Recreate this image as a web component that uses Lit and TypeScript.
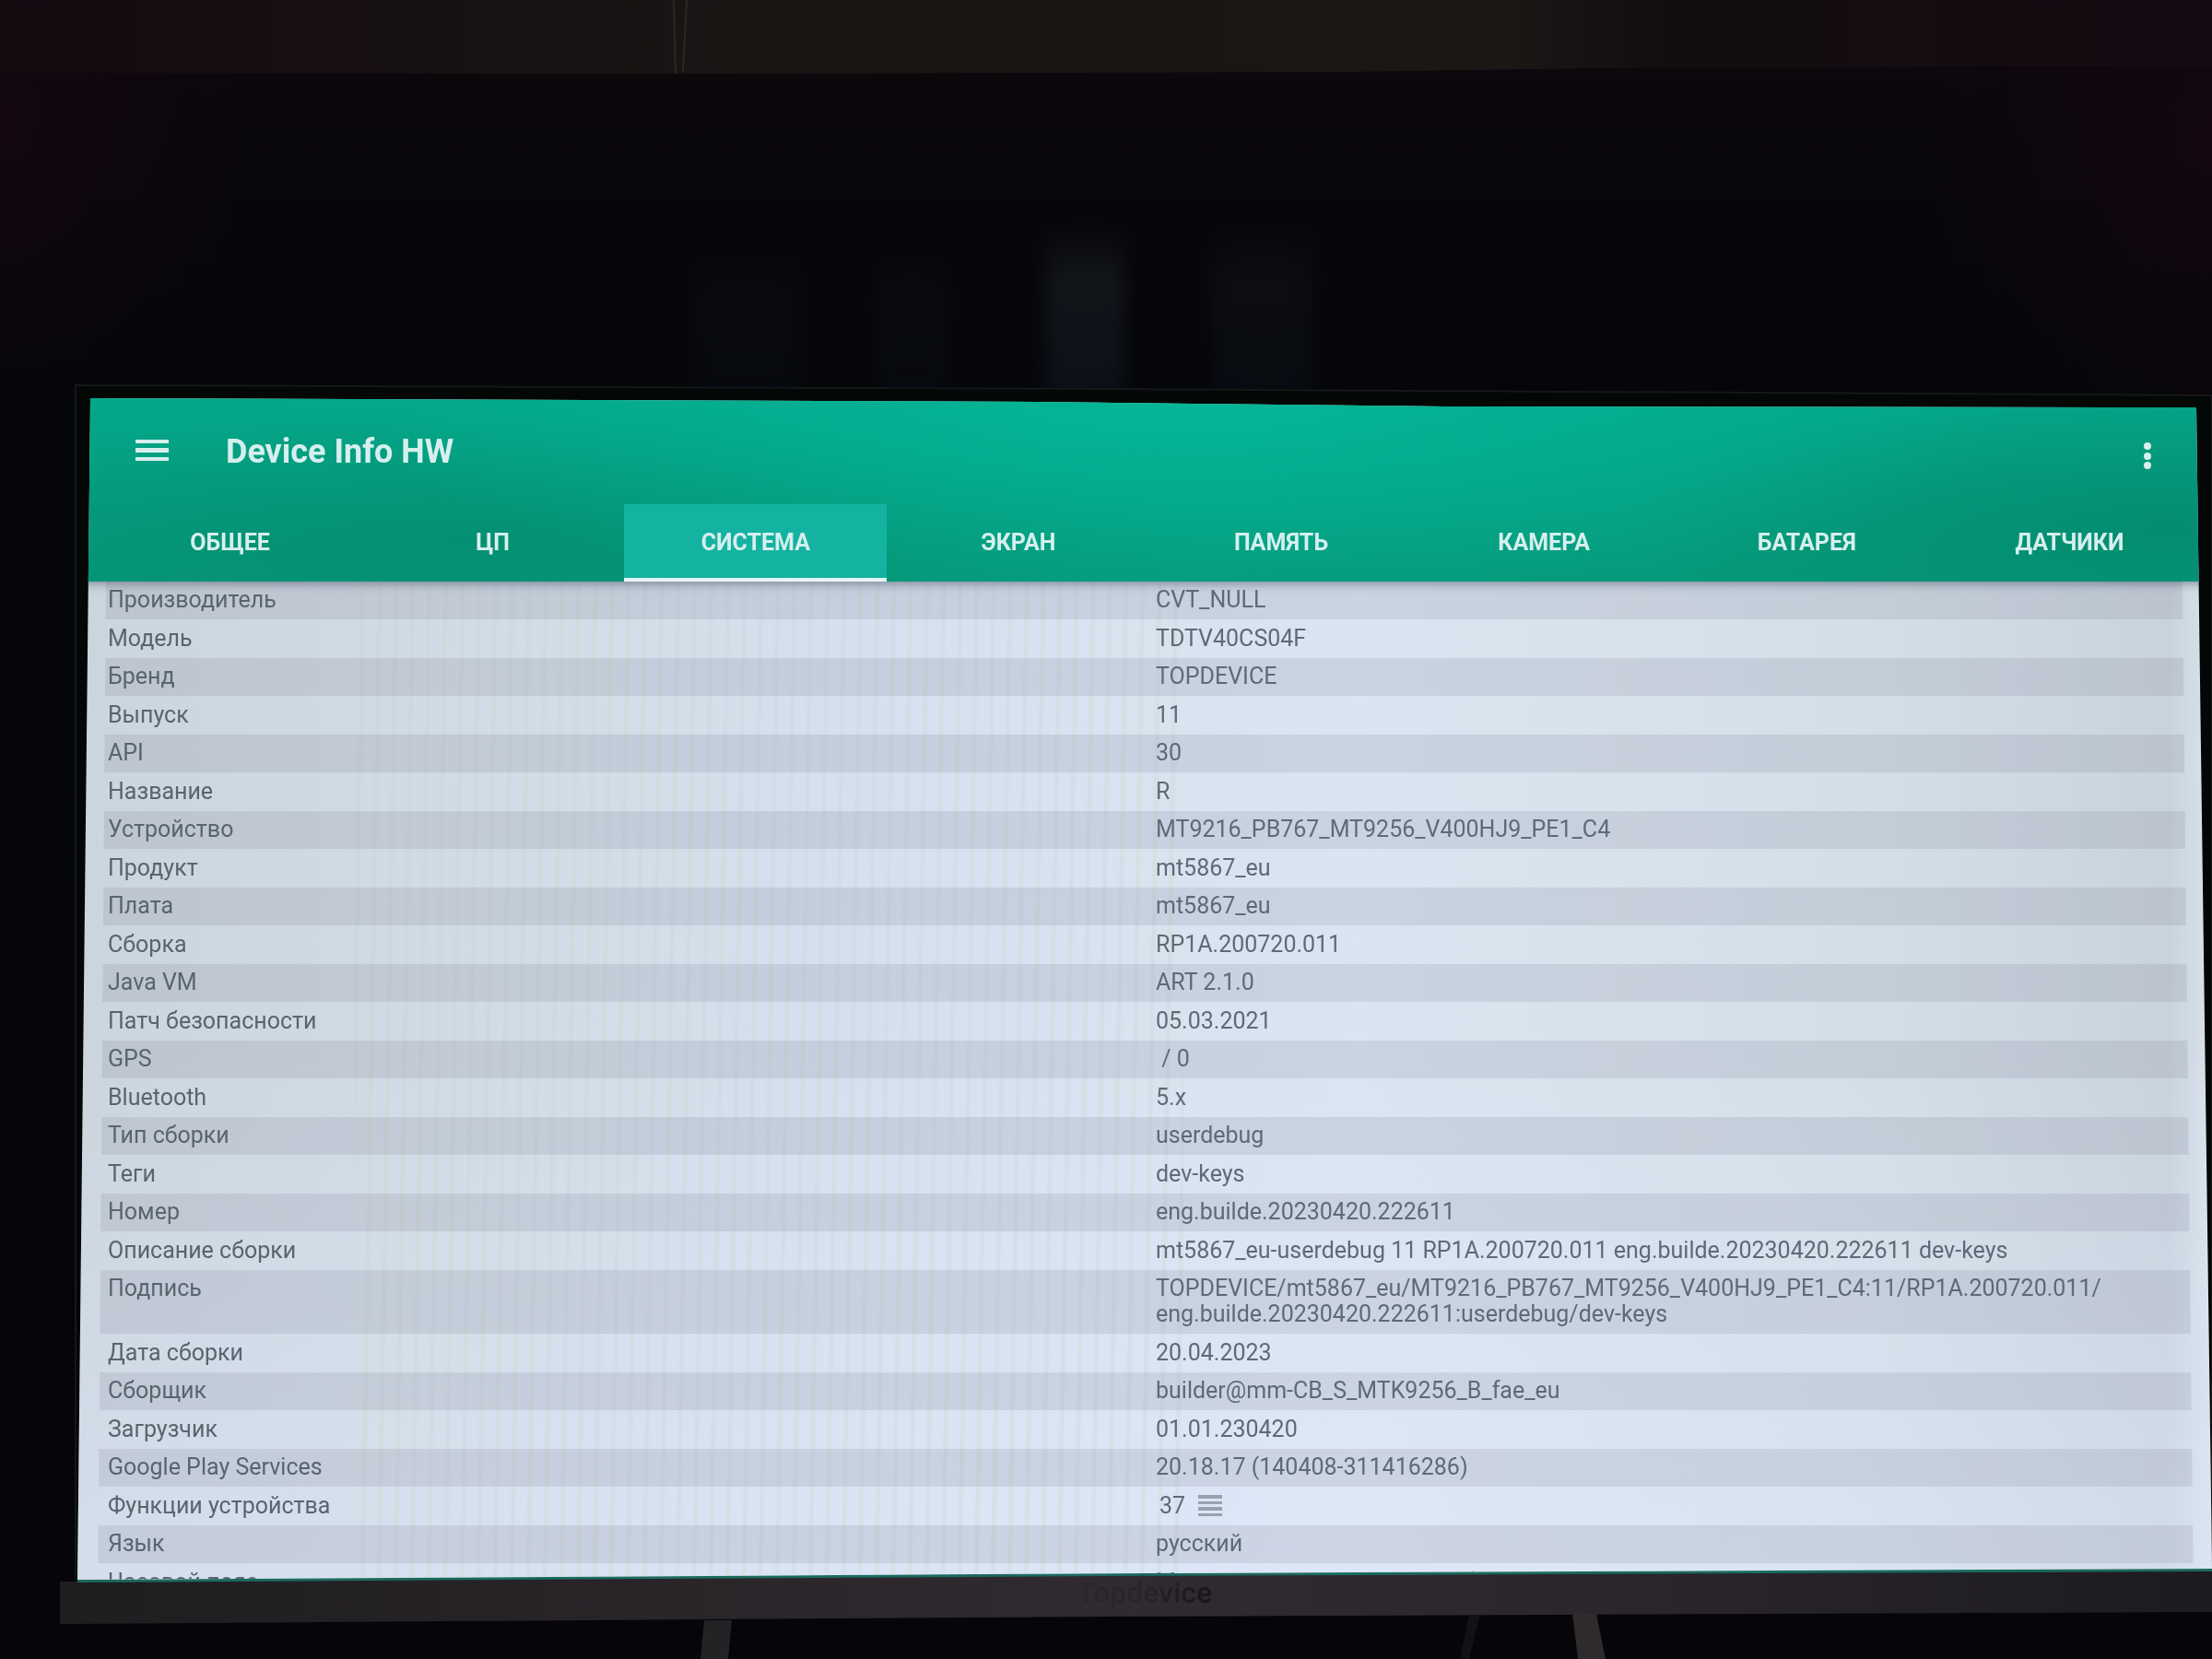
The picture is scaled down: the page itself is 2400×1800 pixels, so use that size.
import { LitElement, html, css } from "lit";
import { customElement, state } from "lit/decorators.js";

interface Row {
  label: string;
  value: string[];
  list?: boolean;
}

const TABS = ["ОБЩЕЕ", "ЦП", "СИСТЕМА", "ЭКРАН", "ПАМЯТЬ", "КАМЕРА", "БАТАРЕЯ", "ДАТЧИКИ"];

const ROWS: Row[] = [
  { label: "Производитель", value: ["CVT_NULL"] },
  { label: "Модель", value: ["TDTV40CS04F"] },
  { label: "Бренд", value: ["TOPDEVICE"] },
  { label: "Выпуск", value: ["11"] },
  { label: "API", value: ["30"] },
  { label: "Название", value: ["R"] },
  { label: "Устройство", value: ["MT9216_PB767_MT9256_V400HJ9_PE1_C4"] },
  { label: "Продукт", value: ["mt5867_eu"] },
  { label: "Плата", value: ["mt5867_eu"] },
  { label: "Сборка", value: ["RP1A.200720.011"] },
  { label: "Java VM", value: ["ART 2.1.0"] },
  { label: "Патч безопасности", value: ["05.03.2021"] },
  { label: "GPS", value: ["\u00a0/ 0"] },
  { label: "Bluetooth", value: ["5.x"] },
  { label: "Тип сборки", value: ["userdebug"] },
  { label: "Теги", value: ["dev-keys"] },
  { label: "Номер", value: ["eng.builde.20230420.222611"] },
  {
    label: "Описание сборки",
    value: ["mt5867_eu-userdebug 11 RP1A.200720.011 eng.builde.20230420.222611 dev-keys"],
  },
  {
    label: "Подпись",
    value: [
      "TOPDEVICE/mt5867_eu/MT9216_PB767_MT9256_V400HJ9_PE1_C4:11/RP1A.200720.011/",
      "eng.builde.20230420.222611:userdebug/dev-keys",
    ],
  },
  { label: "Дата сборки", value: ["20.04.2023"] },
  { label: "Сборщик", value: ["builder@mm-CB_S_MTK9256_B_fae_eu"] },
  { label: "Загрузчик", value: ["01.01.230420"] },
  { label: "Google Play Services", value: ["20.18.17 (140408-311416286)"] },
  { label: "Функции устройства", value: ["37"], list: true },
  { label: "Язык", value: ["русский"] },
  { label: "Часовой пояс", value: ["Москва, стандартное время (GMT+03:00)"] },
];

@customElement("tv-room")
export class TvRoom extends LitElement {
  static styles = css`
    :host {
      display: block;
      height: 100%;
    }
    .room {
      display: block;
      width: 100%;
      height: 100%;
    }
  `;

  render() {
    return html`
      <svg class="room" viewBox="0 0 2400 1800" preserveAspectRatio="none" aria-hidden="true">
        <defs>
          <linearGradient id="wall" x1="0" y1="0" x2="0" y2="1">
            <stop offset="0" stop-color="#0d080c" />
            <stop offset="0.12" stop-color="#08060b" />
            <stop offset="0.24" stop-color="#050609" />
            <stop offset="1" stop-color="#05050a" />
          </linearGradient>
          <radialGradient id="tint" cx="0.5" cy="0.5" r="0.5">
            <stop offset="0" stop-color="#1a0614" stop-opacity="0.6" />
            <stop offset="1" stop-color="#1a0614" stop-opacity="0" />
          </radialGradient>
          <linearGradient id="ceiling" x1="0" y1="0" x2="1" y2="0">
            <stop offset="0" stop-color="#140a10" />
            <stop offset="0.3" stop-color="#191413" />
            <stop offset="0.68" stop-color="#1b1715" />
            <stop offset="0.75" stop-color="#130d0f" />
            <stop offset="1" stop-color="#150b12" />
          </linearGradient>
          <linearGradient id="gleam" x1="0" y1="0" x2="0" y2="1">
            <stop offset="0" stop-color="#14181c" stop-opacity="0" />
            <stop offset="0.35" stop-color="#14181c" stop-opacity="0.9" />
            <stop offset="1" stop-color="#0b101a" />
          </linearGradient>
          <linearGradient id="bezel" x1="0" y1="0" x2="1" y2="0">
            <stop offset="0" stop-color="#1e1d1f" />
            <stop offset="0.3" stop-color="#2a2529" />
            <stop offset="0.5" stop-color="#312b31" />
            <stop offset="0.75" stop-color="#29252b" />
            <stop offset="1" stop-color="#1d1b20" />
          </linearGradient>
          <filter id="soft" x="-50%" y="-20%" width="200%" height="140%" color-interpolation-filters="sRGB">
            <feGaussianBlur stdDeviation="10" />
          </filter>
        </defs>
        <rect width="2400" height="1800" fill="url(#wall)" />
        <ellipse cx="0" cy="140" rx="260" ry="320" fill="url(#tint)" />
        <ellipse cx="2400" cy="160" rx="300" ry="360" fill="url(#tint)" />
        <path d="M0 0H2400V71L1730 74L1460 78L720 80L0 79Z" fill="url(#ceiling)" />
        <path d="M731 0L733 80M745 0L741 78" stroke="#2c2723" stroke-width="2" fill="none" />
        <g fill="url(#gleam)" filter="url(#soft)">
          <rect x="1135" y="240" width="85" height="190" />
          <rect x="1315" y="240" width="110" height="190" opacity="0.5" />
          <rect x="750" y="270" width="120" height="160" opacity="0.3" />
          <rect x="950" y="270" width="80" height="160" opacity="0.35" />
        </g>
        <path d="M82 1712V418L1200 422L2400 429V1712Z" fill="#030705" stroke="#151719" stroke-width="2" />
        <path d="M65 1716L1200 1709L2400 1703V1749L1200 1754L65 1762Z" fill="url(#bezel)" />
        <path d="M84 1715L1200 1708L2400 1703" stroke="#1b6a5e" stroke-width="4" fill="none" />
        <path d="M764 1758H794L790 1800H760Z" fill="#232225" />
        <path d="M1706 1751H1732L1742 1800H1712Z" fill="#2f2a2b" />
        <path d="M1594 1752H1606L1594 1800H1584Z" fill="#111116" />
      </svg>
    `;
  }
}

@customElement("app-root")
export class AppRoot extends LitElement {
  @state() private active = 2;

  static styles = css`
    :host {
      display: block;
      position: relative;
      height: 100vh;
      overflow: hidden;
      background: #05050a;
      font-family: Roboto, "Liberation Sans", sans-serif;
    }
    .backdrop {
      position: absolute;
      inset: 0;
    }
    .scene {
      position: relative;
      box-sizing: border-box;
      height: 100%;
      display: flex;
      flex-direction: column;
      padding: 432px 0 0 84px;
    }
    .screen {
      flex: 1;
      min-height: 0;
      display: flex;
      flex-direction: column;
      overflow: hidden;
      background:
        linear-gradient(180deg, rgba(226, 234, 255, 0) 55%, rgba(226, 234, 255, 0.4) 100%),
        linear-gradient(90deg, #cbd5dd 0, #d0dae4 14%, #d6e1f0 38%, #dbe5f1 60%, #d3dfe8 84%, #c9d3dd 98%, #d8e3ec 100%);
      clip-path: polygon(14px 0, 45% 4px, 64% 9px, 2299px 10px, 100% calc(100% - 12px), 50% calc(100% - 7px), 0 100%);
    }
    .bar {
      position: relative;
      z-index: 1;
      display: flex;
      flex-direction: column;
      color: #d6efee;
      background:
        radial-gradient(ellipse 900px 240px at 52% 0, rgba(4, 188, 157, 0.7), rgba(4, 188, 157, 0)),
        radial-gradient(ellipse 800px 130px at 18% 76%, rgba(3, 132, 102, 0.5), rgba(3, 132, 102, 0)),
        radial-gradient(ellipse 600px 150px at 98% 70%, rgba(3, 124, 96, 0.5), rgba(3, 124, 96, 0)),
        linear-gradient(180deg, #05a78a, #05997a);
      box-shadow: 0 2px 10px rgba(50, 60, 80, 0.5);
    }
    .toolbar {
      display: flex;
      align-items: center;
      height: 115px;
      padding: 0 56px 0 63px;
    }
    .title {
      flex: 1;
      margin: 0 0 0 62px;
      font-size: 36px;
      line-height: 48px;
      font-weight: 700;
    }
    .icon {
      display: flex;
      padding: 0;
      border: 0;
      background: none;
      color: inherit;
      cursor: pointer;
    }
    .tabs {
      display: flex;
      padding: 0 12px 0 23px;
    }
    .tab {
      flex: 1;
      height: 84px;
      padding: 4px 0 0;
      border: 0;
      border-bottom: 4px solid transparent;
      background: none;
      color: inherit;
      font-family: inherit;
      font-size: 25px;
      line-height: 32px;
      font-weight: 700;
      cursor: pointer;
    }
    .tab.active {
      background: #14b2a1;
      background-clip: padding-box;
      border-bottom-color: #e8f3fa;
    }
    .body {
      flex: 1;
      min-height: 0;
      overflow: hidden;
      padding: 0 20px 0 22px;
      background: repeating-linear-gradient(91deg, rgba(200, 215, 190, 0) 0 6px, rgba(196, 212, 190, 0.3) 10px, rgba(200, 215, 190, 0) 14px 18px) 300px 0 / 900px 100% no-repeat;
    }
    .info {
      width: 100%;
      border-collapse: collapse;
      table-layout: fixed;
      color: #5c6b76;
      font-size: 25px;
      line-height: 28px;
      clip-path: polygon(9px 0, calc(100% - 12px) 0, 100% 100%, 0 100%);
    }
    .row:nth-child(odd) {
      background: rgba(105, 105, 125, 0.15);
    }
    .label,
    .value {
      padding: 7px 0 7px 11px;
      text-align: left;
      vertical-align: top;
      font-weight: 400;
      white-space: nowrap;
    }
    .row:nth-child(odd) .label,
    .row:nth-child(odd) .value {
      padding-top: 6px;
    }
    .row .label {
      color: #59646e;
    }
    .line {
      display: block;
    }
    .count {
      display: flex;
      align-items: center;
      gap: 14px;
      padding-left: 4px;
    }
    .list {
      color: #98a2ac;
    }
    .foot {
      height: 86px;
      display: flex;
      justify-content: center;
    }
    .brand {
      font-size: 32px;
      line-height: 28px;
      font-weight: 500;
      color: transparent;
      background: linear-gradient(90deg, #2b262c, #29242a 50%, #18151a);
      background-clip: text;
      -webkit-background-clip: text;
    }
  `;

  render() {
    return html`
      <tv-room class="backdrop"></tv-room>
      <div class="scene">
        <main class="screen">
          <header class="bar">
            <div class="toolbar">
              <button class="icon" aria-label="Меню">
                <svg width="36" height="26" viewBox="0 0 36 26" fill="currentColor">
                  <path d="M0 0h36v4H0zM0 9h36v5H0zM0 19h36v4H0z" />
                </svg>
              </button>
              <h1 class="title">Device Info HW</h1>
              <button class="icon" aria-label="Ещё">
                <svg width="28" height="38" viewBox="0 0 28 38" fill="currentColor">
                  <circle cx="14" cy="13" r="4" />
                  <circle cx="14" cy="24" r="4" />
                  <circle cx="14" cy="34" r="4" />
                </svg>
              </button>
            </div>
            <nav class="tabs" role="tablist">
              ${TABS.map(
                (name, i) => html`
                  <button
                    class="tab ${i === this.active ? "active" : ""}"
                    role="tab"
                    aria-selected=${i === this.active}
                    @click=${() => (this.active = i)}
                  >${name}</button>
                `
              )}
            </nav>
          </header>
          <div class="body">
            <table class="info">
              <tbody>
                ${ROWS.map(
                  (row) => html`
                    <tr class="row">
                      <th class="label" scope="row">${row.label}</th>
                      <td class="value">
                        ${row.list
                          ? html`<span class="count">${row.value[0]}${this.listIcon()}</span>`
                          : row.value.map((line) => html`<span class="line">${line}</span>`)}
                      </td>
                    </tr>
                  `
                )}
              </tbody>
            </table>
          </div>
        </main>
        <footer class="foot"><span class="brand">Topdevice</span></footer>
      </div>
    `;
  }

  private listIcon() {
    return html`
      <svg class="list" width="26" height="24" viewBox="0 0 26 24" fill="currentColor" aria-hidden="true">
        <path d="M0 0h26v4H0zM0 7h26v3H0zM0 13h26v4H0zM0 20h26v3H0z" />
      </svg>
    `;
  }
}
